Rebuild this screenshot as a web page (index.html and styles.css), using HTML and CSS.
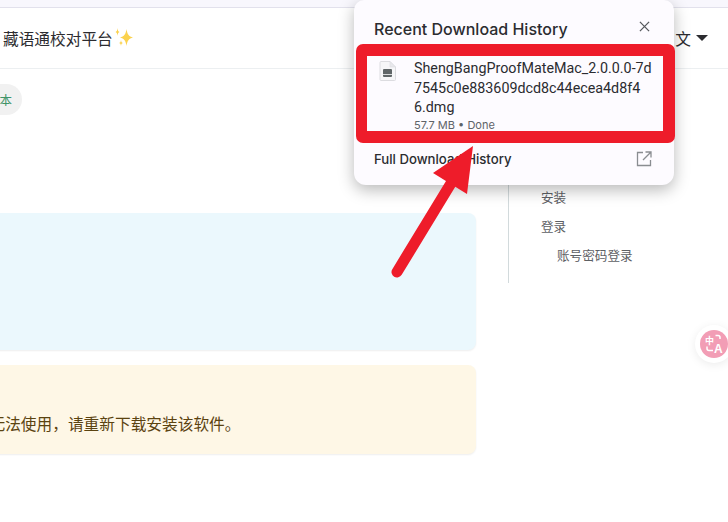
FILE: index.html
```html
<!DOCTYPE html>
<html lang="zh">
<head>
<meta charset="utf-8">
<title>Download history</title>
<link rel="stylesheet" href="styles.css">
</head>
<body>
<div class="browser-strip"></div>
<header class="site-header">
  <div class="site-title">藏语通校对平台<svg class="sparkle" viewBox="0 0 20 20" aria-hidden="true"><path d="M12.500 1c.7 5.200 2.300 7.400 6.500 8.500-4.200 1.100-5.800 3.300-6.500 8.500-.7-5.200-2.300-7.400-6.500-8.500 4.200-1.100 5.800-3.300 6.500-8.500z"/><path d="M3.500 0c.2 2.500.7 3.500 2 4-1.300.5-1.800 1.500-2 4-.2-2.500-.7-3.500-2-4 1.300-.5 1.800-1.500 2-4z"/><path d="M7 12c.2 2 .8 2.700 2.200 3-1.400.3-2 1-2.200 3-.2-2-.8-2.700-2.200-3 1.400-.3 2-1 2.200-3z"/></svg></div>
  <div class="lang">文<span class="caret"></span></div>
</header>
<div class="page">
  <main class="content">
    <div class="pill">本</div>
    <div class="notice notice-info"></div>
    <div class="notice notice-warn"><p>无法使用，请重新下载安装该软件。</p></div>
  </main>
  <nav class="toc">
    <a class="toc-item">安装</a>
    <a class="toc-item">登录</a>
    <a class="toc-item toc-sub">账号密码登录</a>
  </nav>
</div>

<section class="popup">
  <div class="popup-head">
    <h2>Recent Download History</h2>
    <svg class="close" viewBox="0 0 12 12" aria-hidden="true"><path d="M1 1l10 10M11 1L1 11"/></svg>
  </div>
  <div class="download">
    <svg class="file" viewBox="0 0 17 20" aria-hidden="true">
      <path class="file-sheet" d="M1 1.500a1 1 0 0 1 1-1h9l5.500 5.500v12.500a1 1 0 0 1-1 1H2a1 1 0 0 1-1-1z"/>
      <path class="file-fold" d="M11 .5v5.500h5.500z"/>
      <rect class="file-disk" x="4" y="8" width="9" height="8" rx="1"/>
      <rect class="file-slot" x="4" y="13" width="9" height="1"/>
    </svg>
    <div class="download-body">
      <div class="filename">ShengBangProofMateMac_2.0.0.0-7d<br>7545c0e883609dcd8c44ecea4d8f4<br>6.dmg</div>
      <div class="status">57.7 MB • Done</div>
    </div>
  </div>
  <div class="popup-foot">
    <span>Full Download History</span>
    <svg class="external" viewBox="0 0 16 16" aria-hidden="true"><path d="M7 1.500H1.500v13h13V9M9.500 1h5.500v5.500M15 1L7 9"/></svg>
  </div>
</section>

<svg class="arrow" viewBox="0 0 728 522" aria-hidden="true">
  <line x1="397" y1="272" x2="453" y2="180"/>
  <polygon points="473,146 433,173 467,194"/>
</svg>

<div class="translate">
  <svg viewBox="0 0 28 28" aria-hidden="true">
    <text class="tr-zh" x="5" y="14">中</text>
    <text class="tr-en" x="14" y="23">A</text>
    <path d="M15.500 5.500h2.500a2 2 0 0 1 2 2v1.500M7 16.500v2a2 2 0 0 0 2 2h4"/>
  </svg>
</div>
<div class="footer-frag">安装</div>
</body>
</html>
```

FILE: styles.css
```css
* { box-sizing: border-box; }
html, body { height: 100%; }
body {
  margin: 0;
  width: 728px;
  height: 522px;
  overflow: hidden;
  position: relative;
  background: #fff;
  font-family: Inter, "Noto Sans CJK SC", sans-serif;
  color: #222;
}
.browser-strip {
  height: 8px;
  background: #f8f7fd;
  border-bottom: 1px solid #e2e1ec;
}
.site-header {
  height: 61px;
  padding: 0 20px 0 3px;
  display: flex;
  align-items: center;
  justify-content: space-between;
  border-bottom: 1px solid #eceff1;
}
.site-title {
  font-family: "Noto Sans CJK SC", sans-serif;
  font-size: 15.7px;
  color: #2c2c30;
  display: flex;
  align-items: center;
}
.sparkle { width: 20px; height: 20px; margin-left: 1px; fill: #fbd24e; }
.lang {
  font-family: "Noto Sans CJK SC", sans-serif;
  font-size: 15.7px;
  color: #2c2c30;
  display: flex;
  align-items: center;
  gap: 5px;
}
.caret {
  width: 0;
  height: 0;
  border-left: 6px solid transparent;
  border-right: 6px solid transparent;
  border-top: 6px solid #2c2c30;
}
.page { display: flex; }
.content { width: 496px; margin-left: -20px; padding-top: 15px; }
.pill {
  width: 36px;
  height: 31px;
  margin-left: 6px;
  border-radius: 16px;
  background: #f1f1f1;
  color: #3f9469;
  font-family: "Noto Sans CJK SC", sans-serif;
  font-size: 12.500px;
  display: flex;
  align-items: center;
  justify-content: flex-end;
  padding-right: 10px;
}
.notice {
  border-radius: 8px;
  box-shadow: 0 1px 2px rgba(0, 0, 0, .07);
}
.notice-info {
  margin-top: 98px;
  height: 137px;
  background: #ebf8fd;
}
.notice-warn {
  margin-top: 15px;
  height: 89px;
  background: #fef7e6;
  display: flex;
  align-items: flex-end;
  overflow: hidden;
}
.notice-warn p {
  margin: 0 0 19px 9.500px;
  font-family: "Noto Sans CJK SC", sans-serif;
  font-size: 15.700px;
  line-height: 22px;
  color: #5b4310;
  white-space: nowrap;
}
.toc {
  margin: 0 0 0 32px;
  width: 190px;
  height: 214px;
  border-left: 1px solid #d2dadc;
  padding: 119px 0 0 32px;
  display: flex;
  flex-direction: column;
  gap: 11px;
  font-family: "Noto Sans CJK SC", sans-serif;
  font-size: 12.600px;
  line-height: 18px;
  color: #5d6064;
}
.toc-sub { margin-left: 16px; }
.popup {
  position: absolute;
  left: 354px;
  top: 0;
  width: 320px;
  height: 185px;
  background: #fdfbff;
  border-radius: 10px 10px 12px 12px;
  box-shadow: 0 5px 16px rgba(0, 0, 0, .28);
  display: flex;
  flex-direction: column;
}
.popup-head {
  height: 44px;
  padding: 18px 24px 0 20px;
  display: flex;
  justify-content: space-between;
  align-items: flex-start;
}
.popup-head h2 {
  margin: 0;
  font-size: 16px;
  line-height: 22px;
  font-weight: 500;
  color: #2b2c30;
}
.close { width: 11px; height: 11px; margin-top: 3px; stroke: #55585c; stroke-width: 1.400; fill: none; }
.download {
  position: relative;
  margin: 0 -1px 0 2px;
  height: 99px;
  border: 12px solid #ee1c2a;
  border-left-width: 11px;
  border-radius: 7px;
  display: flex;
  gap: 18px;
  padding: 3px 10px 0 12px;
}
.file { width: 17px; height: 20px; margin-top: 2px; flex: none; }
.file-sheet { fill: #f6f6f8; stroke: #dcdce0; stroke-width: 1; }
.file-fold { fill: #e8e8ec; stroke: #dcdce0; stroke-width: .6; }
.file-disk { fill: #5f6567; }
.file-slot { fill: #d9dbdc; }
.download-body { flex: 1; min-width: 0; }
.filename {
  font-family: Roboto, sans-serif;
  font-size: 14.300px;
  line-height: 19.600px;
  color: #2b2c30;
  white-space: nowrap;
}
.status {
  font-size: 11px;
  line-height: 15px;
  color: #5f6368;
}
.popup-foot {
  flex: 1;
  padding: 0 22px 10px 20px;
  display: flex;
  align-items: center;
  justify-content: space-between;
  font-size: 13.200px;
  font-weight: 500;
  color: #2b2c30;
}
.external { width: 16px; height: 16px; stroke: #8a8d91; stroke-width: 1.300; fill: none; }
.arrow {
  position: absolute;
  left: 0;
  top: 0;
  width: 728px;
  height: 522px;
  pointer-events: none;
}
.arrow line { stroke: #ee1c2a; stroke-width: 11; stroke-linecap: round; }
.arrow polygon { fill: #ee1c2a; }
.translate {
  position: absolute;
  left: 695px;
  top: 325px;
  width: 38px;
  height: 38px;
  padding: 5px;
  border-radius: 50%;
  background: #fff;
  box-shadow: 0 2px 10px rgba(0, 0, 0, .08);
}
.translate svg {
  display: block;
  width: 28px;
  height: 28px;
  border-radius: 50%;
  background: #f29db5;
}
.translate path { stroke: #fff; stroke-width: 1.500; fill: none; }
.tr-zh { font: 700 9px "Noto Sans CJK SC", sans-serif; fill: #fff; }
.tr-en { font: 700 12px "Liberation Sans", sans-serif; fill: #fff; }
.footer-frag {
  position: absolute;
  left: 0;
  top: 520px;
  font-family: "Noto Sans CJK SC", sans-serif;
  font-size: 14px;
  line-height: 20px;
  color: #9a9a9a;
}
```
